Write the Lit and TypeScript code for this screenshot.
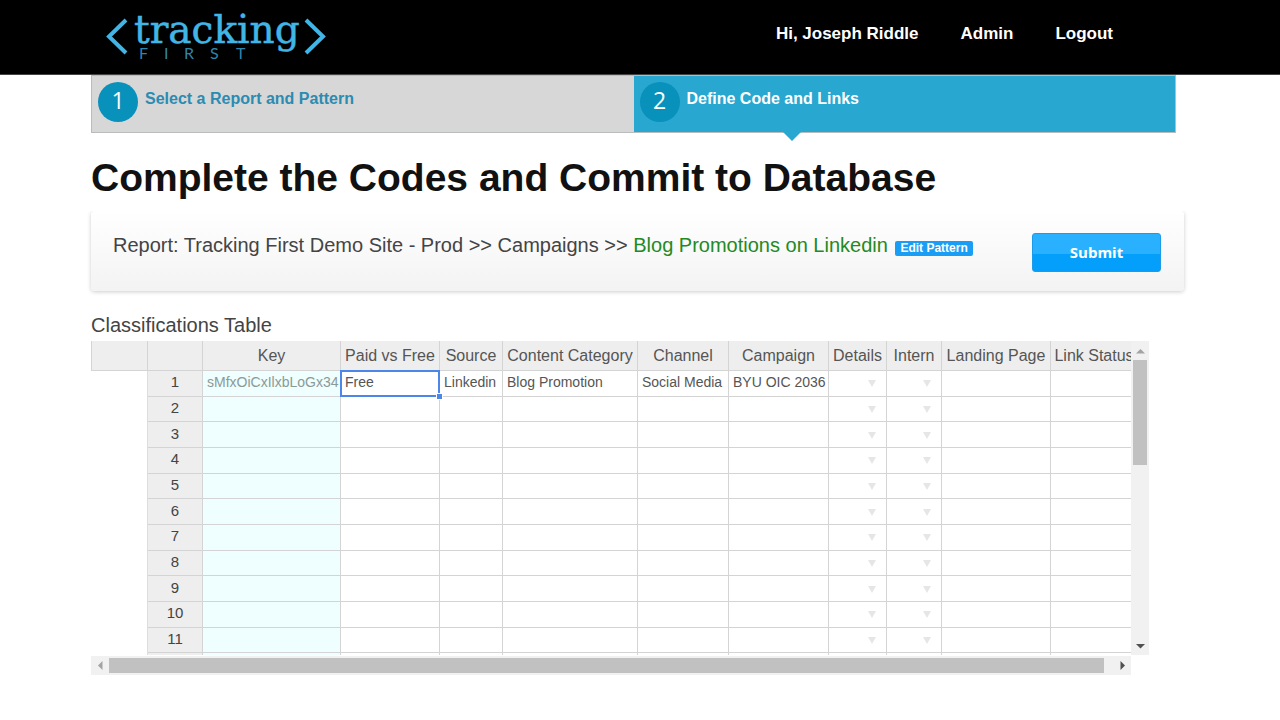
import { LitElement, html, css, nothing } from "lit";
import { customElement, property, state } from "lit/decorators.js";
import { classMap } from "lit/directives/class-map.js";

interface Column {
  label: string;
  width: number;
  kind?: "key" | "menu";
}

const COLUMNS: Column[] = [
  { label: "Key", width: 138, kind: "key" },
  { label: "Paid vs Free", width: 99 },
  { label: "Source", width: 63 },
  { label: "Content Category", width: 135 },
  { label: "Channel", width: 91 },
  { label: "Campaign", width: 100 },
  { label: "Details", width: 58, kind: "menu" },
  { label: "Intern", width: 55, kind: "menu" },
  { label: "Landing Page", width: 109 },
  { label: "Link Status", width: 87 },
];

const FIRST_ROW = [
  "sMfxOiCxIlxbLoGx34",
  "Free",
  "Linkedin",
  "Blog Promotion",
  "Social Media",
  "BYU OIC 2036",
];

const ROWS: string[][] = [FIRST_ROW, ...Array.from({ length: 11 }, () => [] as string[])];

@customElement("site-header")
class SiteHeader extends LitElement {
  static styles = css`
    .bar {
      display: flex;
      justify-content: space-between;
      align-items: flex-start;
      height: 75px;
      box-sizing: border-box;
      padding: 10px 167px 0 105px;
      background: #000;
      border-bottom: 1px solid #444;
    }
    .logo {
      display: block;
    }
    .logo svg {
      display: block;
      overflow: visible;
    }
    .mark {
      fill: none;
      stroke: #41b6e6;
      stroke-width: 4;
    }
    .word {
      fill: #41b6e6;
      stroke: #41b6e6;
      stroke-width: 0.5;
      font: 39px "DejaVu Serif", serif;
    }
    .sub {
      fill: #2f86ab;
      font: 16px Lato, sans-serif;
    }
    .links {
      display: flex;
      gap: 42px;
      padding-top: 14px;
    }
    .links a {
      color: #fff;
      font: bold 17px/20px "Liberation Sans", Arial, sans-serif;
      text-decoration: none;
    }
  `;

  render() {
    return html`
      <header class="bar">
        <a class="logo" href="#home" aria-label="Tracking First">
          <svg width="222" height="54" viewBox="0 0 222 54">
            <path class="mark" d="M21 10 L4 26.5 L21 43" />
            <text class="word" x="29" y="33">tracking</text>
            <text class="sub" x="34 59 79 105 131" y="49">FIRST</text>
            <path class="mark" d="M201 10 L218 26.5 L201 43" />
          </svg>
        </a>
        <nav class="links">
          <a href="#profile">Hi, Joseph Riddle</a>
          <a href="#admin">Admin</a>
          <a href="#logout">Logout</a>
        </nav>
      </header>
    `;
  }
}

@customElement("step-bar")
class StepBar extends LitElement {
  static styles = css`
    .steps {
      display: grid;
      grid-template-columns: 1fr 1fr;
      margin: 0;
      padding: 0;
      list-style: none;
      border: 1px solid #b9bcbd;
    }
    .step {
      position: relative;
      background: #d7d7d7;
    }
    .step a {
      display: flex;
      gap: 7px;
      height: 56px;
      box-sizing: border-box;
      padding: 6px 6px;
      color: #2b8bb1;
      font: bold 16px/24px "Liberation Sans", Arial, sans-serif;
      text-decoration: none;
    }
    .num {
      width: 40px;
      height: 40px;
      border-radius: 50%;
      background: #0891bb;
      color: #fff;
      font: 500 23px/36px "Open Sans", sans-serif;
      text-align: center;
    }
    .active {
      background: #28a7d0;
    }
    .active a {
      color: #fff;
    }
    .active::after {
      content: "";
      position: absolute;
      top: 100%;
      left: 149px;
      border: 9px solid transparent;
      border-top-color: #28a7d0;
      border-bottom: 0;
    }
    .label {
      padding-top: 5px;
    }
  `;

  render() {
    return html`
      <ol class="steps">
        <li class="step">
          <a href="#report"><span class="num">1</span><span class="label">Select a Report and Pattern</span></a>
        </li>
        <li class="step active">
          <a href="#define" aria-current="step"><span class="num">2</span><span class="label">Define Code and Links</span></a>
        </li>
      </ol>
    `;
  }
}

@customElement("code-grid")
class CodeGrid extends LitElement {
  @property({ attribute: false }) rows: string[][] = [];
  @state() private selected = [0, 1];

  static styles = css`
    :host {
      display: block;
      font-family: "Liberation Sans", Arial, sans-serif;
      color: #555;
    }
    .frame {
      display: grid;
      grid-template-columns: minmax(0, 1fr) 18px;
      grid-template-rows: 314px 19px;
      row-gap: 1px;
    }
    .pane {
      overflow: hidden;
    }
    .table {
      width: 1047px;
      height: 338px;
      table-layout: fixed;
      border-collapse: separate;
      border-spacing: 0;
    }
    .table th,
    .table td {
      box-sizing: border-box;
      padding: 0 4px;
      border: 0 solid #d4d4d4;
      border-width: 0 1px 1px 0;
      white-space: nowrap;
      line-height: 20px;
    }
    .head th {
      height: 30px;
      padding: 0;
      background: #eee;
      font-size: 16px;
      font-weight: normal;
    }
    .head th:first-child {
      border-left-width: 1px;
    }
    .table .gutter {
      border-bottom-width: 0;
      border-right-color: #ddd;
    }
    .table .rownum {
      padding-bottom: 2px;
      background: #eee;
      font-size: 15px;
      font-weight: normal;
      text-align: center;
      color: #444;
    }
    .table td {
      font-size: 14px;
      text-align: left;
      padding-bottom: 2px;
    }
    .table .key {
      background: #effefe;
      color: #8a9a98;
    }
    .table .menu {
      padding-right: 10px;
      text-align: right;
    }
    .drop {
      display: inline-block;
      border: 4px solid transparent;
      border-top: 7px solid #e6e6e6;
      border-bottom: 0;
    }
    .table .selected {
      position: relative;
    }
    .selected::before {
      content: "";
      position: absolute;
      inset: -1px;
      border: 2px solid #4b86e8;
    }
    .selected::after {
      content: "";
      position: absolute;
      right: -4px;
      bottom: -4px;
      width: 5px;
      height: 5px;
      background: #4b86e8;
      border: 1px solid #fff;
    }
    .bar {
      display: flex;
      background: #f1f1f1;
    }
    .bar.v {
      flex-direction: column;
      padding: 1px 1px 0 0;
    }
    .bar.h {
      padding: 2px 0;
    }
    .arrow {
      display: grid;
      place-items: center;
      flex: none;
      width: 18px;
      height: 18px;
      padding: 0;
      border: 0;
      background: none;
    }
    .h .arrow {
      height: 15px;
    }
    .glyph {
      fill: #505050;
    }
    .glyph.off {
      fill: #a3a3a3;
    }
    .thumb {
      background: #c1c1c1;
    }
    .v .thumb {
      height: 105px;
      margin: 0 1px 0 2px;
    }
    .h .thumb {
      flex: 1;
      margin-right: 9px;
    }
    .rest {
      flex: 1;
    }
  `;

  private cell(row: string[], r: number, col: Column, c: number) {
    const classes = {
      key: col.kind === "key",
      menu: col.kind === "menu",
      selected: this.selected[0] === r && this.selected[1] === c,
    };
    return html`<td class=${classMap(classes)} @click=${() => (this.selected = [r, c])}>
      ${row[c] ?? nothing}${col.kind === "menu" ? html`<span class="drop"></span>` : nothing}
    </td>`;
  }

  private arrow(label: string, points: string, off = false) {
    return html`<button class="arrow" type="button" aria-label=${label}>
      <svg width="9" height="9" viewBox="0 0 9 9">
        <polygon class=${classMap({ glyph: true, off })} points=${points} />
      </svg>
    </button>`;
  }

  render() {
    return html`
      <div class="frame">
        <div class="pane">
          <table class="table" aria-label="Classifications Table">
            <colgroup>
              <col style="width:57px" />
              <col style="width:55px" />
              ${COLUMNS.map((c) => html`<col style="width:${c.width}px" />`)}
            </colgroup>
            <thead>
              <tr class="head">
                <th></th>
                <th></th>
                ${COLUMNS.map((c) => html`<th scope="col">${c.label}</th>`)}
              </tr>
            </thead>
            <tbody>
              ${this.rows.map(
                (row, r) => html`<tr>
                  <td class="gutter"></td>
                  <th class="rownum" scope="row">${r + 1}</th>
                  ${COLUMNS.map((col, c) => this.cell(row, r, col, c))}
                </tr>`
              )}
            </tbody>
          </table>
        </div>
        <div class="bar v">
          ${this.arrow("Scroll up", "0,6.5 4.5,2 9,6.5", true)}
          <div class="thumb"></div>
          <div class="rest"></div>
          ${this.arrow("Scroll down", "0,2 9,2 4.5,6.5")}
        </div>
        <div class="bar h">
          ${this.arrow("Scroll left", "6.5,0 6.5,9 2,4.5", true)}
          <div class="thumb"></div>
          ${this.arrow("Scroll right", "2.5,0 7,4.5 2.5,9")}
        </div>
      </div>
    `;
  }
}

@customElement("app-root")
class AppRoot extends LitElement {
  static styles = css`
    :host {
      display: block;
      min-height: 100vh;
      background: #fff;
      color: #444;
      font-family: "Liberation Sans", Arial, sans-serif;
    }
    .page {
      padding: 0 96px 0 91px;
    }
    .steps {
      display: block;
      margin-right: 8px;
    }
    .title {
      margin: 20px 0 8px;
      color: #111;
      font-size: 39px;
      line-height: 50px;
    }
    .panel {
      display: flex;
      justify-content: space-between;
      align-items: flex-start;
      box-sizing: border-box;
      min-height: 80px;
      padding: 22px 23px 0 22px;
      border-radius: 4px;
      background: linear-gradient(#fff, #f3f3f3);
      box-shadow: 0 1px 4px rgba(0, 0, 0, 0.2);
      clip-path: inset(0 -6px -6px -6px);
    }
    .report {
      margin: 0;
      font-size: 20px;
      line-height: 24px;
    }
    .pattern {
      color: #238a23;
    }
    .edit {
      display: inline-block;
      margin-left: 2px;
      padding: 0 5px;
      border-radius: 2px;
      background: #1a9df5;
      color: #fff;
      font-size: 12px;
      font-weight: bold;
      line-height: 15px;
      text-decoration: none;
    }
    .submit {
      width: 129px;
      height: 39px;
      padding: 0 0 2px;
      border: 1px solid #1c9be8;
      border-radius: 3px;
      background: linear-gradient(#29b0ff 55%, #049ffb 55%);
      color: #fff;
      font: bold 15px "Open Sans", sans-serif;
    }
    .caption {
      margin: 22px 0 4px;
      font-size: 20px;
      font-weight: normal;
      line-height: 24px;
    }
    .grid {
      margin-right: 35px;
    }
  `;

  render() {
    return html`
      <site-header></site-header>
      <main class="page">
        <step-bar class="steps"></step-bar>
        <h1 class="title">Complete the Codes and Commit to Database</h1>
        <section class="panel">
          <p class="report">
            Report: Tracking First Demo Site - Prod &gt;&gt; Campaigns &gt;&gt;
            <span class="pattern">Blog Promotions on Linkedin</span>
            <a class="edit" href="#edit">Edit Pattern</a>
          </p>
          <button class="submit" type="button">Submit</button>
        </section>
        <h2 class="caption">Classifications Table</h2>
        <code-grid class="grid" .rows=${ROWS}></code-grid>
      </main>
    `;
  }
}
